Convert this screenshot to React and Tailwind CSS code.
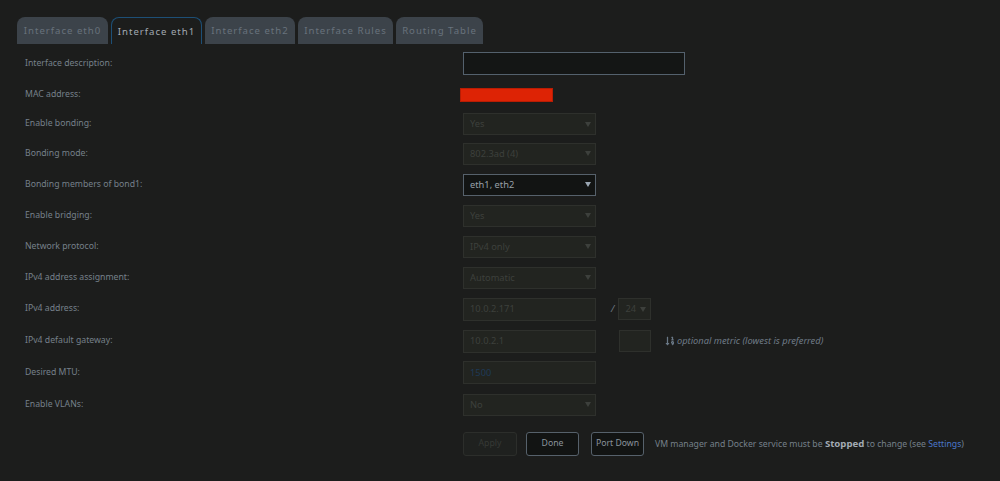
import { FaSortNumericDown } from "react-icons/fa";

const tabs = [
  { label: "Interface eth0", w: "w-[91px]" },
  { label: "Interface eth1", w: "w-[91px]", active: true },
  { label: "Interface eth2", w: "w-[90px]" },
  { label: "Interface Rules", w: "w-[95px]" },
  { label: "Routing Table", w: "w-[87px]" },
];

function Caret({ className = "fill-[#3c3f3b]" }) {
  return (
    <svg width="6" height="5" viewBox="0 0 6 5" className={className}>
      <path d="M0 0h6L3 5z" />
    </svg>
  );
}

// выключенный select
function Select({ value, w = "w-[133px]", active = false }) {
  return (
    <div
      className={
        active
          ? `${w} h-[22px] flex items-center justify-between pl-[6px] pr-[4px] border border-[#56616b] bg-[#121413] text-[#98a0a8] text-[9.3px]`
          : `${w} h-[22px] flex items-center justify-between pl-[6px] pr-[4px] border border-[#2e302c] bg-[#222420] text-[#3d403c] text-[9.3px]`
      }
    >
      <span>{value}</span>
      <Caret className={active ? "fill-[#9aa6b2]" : "fill-[#3d403c]"} />
    </div>
  );
}

function Input({ value = "", w = "w-[133px]", textClass = "text-[#3d403c]" }) {
  return (
    <div
      className={`${w} h-[23px] flex items-center pl-[6px] border border-[#2e302c] bg-[#222420] text-[9.3px] ${textClass}`}
    >
      {value}
    </div>
  );
}

function Row({ label, h = "h-[31px]", children }) {
  return (
    <div className={`flex items-center ${h}`}>
      <div className="w-[438px] text-[#76808a]">{label}</div>
      <div className="flex items-center">{children}</div>
    </div>
  );
}

export default function App() {
  return (
    <div
      className="w-[1000px] h-[481px] bg-[#1c1d1c] text-[8.7px] overflow-hidden"
      style={{ fontFamily: '"Noto Sans", "Open Sans", sans-serif' }}
    >
      {/* === Вкладки === */}
      <div className="flex gap-[3px] pl-[17px] pt-[17px]">
        {tabs.map((t) => (
          <div
            key={t.label}
            className={
              t.active
                ? `${t.w} h-[27px] pt-[2px] flex items-center justify-center rounded-t-[8px] border border-b-0 border-[#1d4f76] bg-[#1c1d1c] text-[#a2aab2] tracking-[1px] text-[9.6px]`
                : `${t.w} h-[27px] pt-[2px] flex items-center justify-center rounded-t-[8px] bg-[#3c434a] text-[#68727c] tracking-[1px] text-[9.6px]`
            }
          >
            {t.label}
          </div>
        ))}
      </div>

      {/* === Форма === */}
      <div className="pl-[25px] pt-[4px]">
        <Row label="Interface description:">
          <div className="w-[222px] h-[23px] border border-[#54616d] bg-[#141615]" />
        </Row>
        <Row label="MAC address:">
          <div className="-ml-[3px] w-[93px] h-[14px] bg-[#dd2305] border border-[#b81d04]" />
        </Row>
        <Row label="Enable bonding:" h="h-[28px]">
          <Select value="Yes" />
        </Row>
        <Row label="Bonding mode:">
          <Select value="802.3ad (4)" />
        </Row>
        <Row label="Bonding members of bond1:">
          <Select value="eth1, eth2" active />
        </Row>
        <Row label="Enable bridging:">
          <Select value="Yes" />
        </Row>
        <Row label="Network protocol:">
          <Select value="IPv4 only" />
        </Row>
        <Row label="IPv4 address assignment:">
          <Select value="Automatic" />
        </Row>
        <Row label="IPv4 address:" h="h-[32px]">
          <Input value="10.0.2.171" />
          <span className="ml-[15px] mr-[4px] text-[#6f7983] italic text-[9.5px]">/</span>
          <Select value="24" w="w-[33px]" />
        </Row>
        <Row label="IPv4 default gateway:" h="h-[32px]">
          <Input value="10.0.2.1" />
          <div className="ml-[23px] w-[32px] h-[22px] border border-[#2e302c] bg-[#222420]" />
          <FaSortNumericDown className="ml-[14px] text-[#6a7886]" size={10} />
          <span className="ml-[2px] italic text-[#6f7b87] text-[9.3px]">
            optional metric (lowest is preferred)
          </span>
        </Row>
        <Row label="Desired MTU:">
          <Input value="1500" textClass="text-[#1e3a57]" />
        </Row>
        <Row label="Enable VLANs:" h="h-[33px]">
          <Select value="No" />
        </Row>

        {/* === Кнопки === */}
        <div className="flex items-center mt-[11px] pl-[438px]">
          <button className="w-[54px] h-[24px] rounded-[3px] border border-[#2c2e2b] bg-[#1f211f] text-[#363935]">
            Apply
          </button>
          <button className="ml-[9px] w-[53px] h-[24px] rounded-[3px] border border-[#56616b] bg-[#121413] text-[#8a939c]">
            Done
          </button>
          <button className="ml-[12px] w-[53px] h-[24px] rounded-[3px] border border-[#56616b] bg-[#121413] text-[#8a939c]">
            Port Down
          </button>
          <span className="ml-[11px] text-[#76808a]">
            VM manager and Docker service must be{" "}
            <b className="text-[#a3abb3] text-[9.6px]">Stopped</b> to change (see{" "}
            <span className="text-[#4a76c9]">Settings</span>)
          </span>
        </div>
      </div>
    </div>
  );
}
